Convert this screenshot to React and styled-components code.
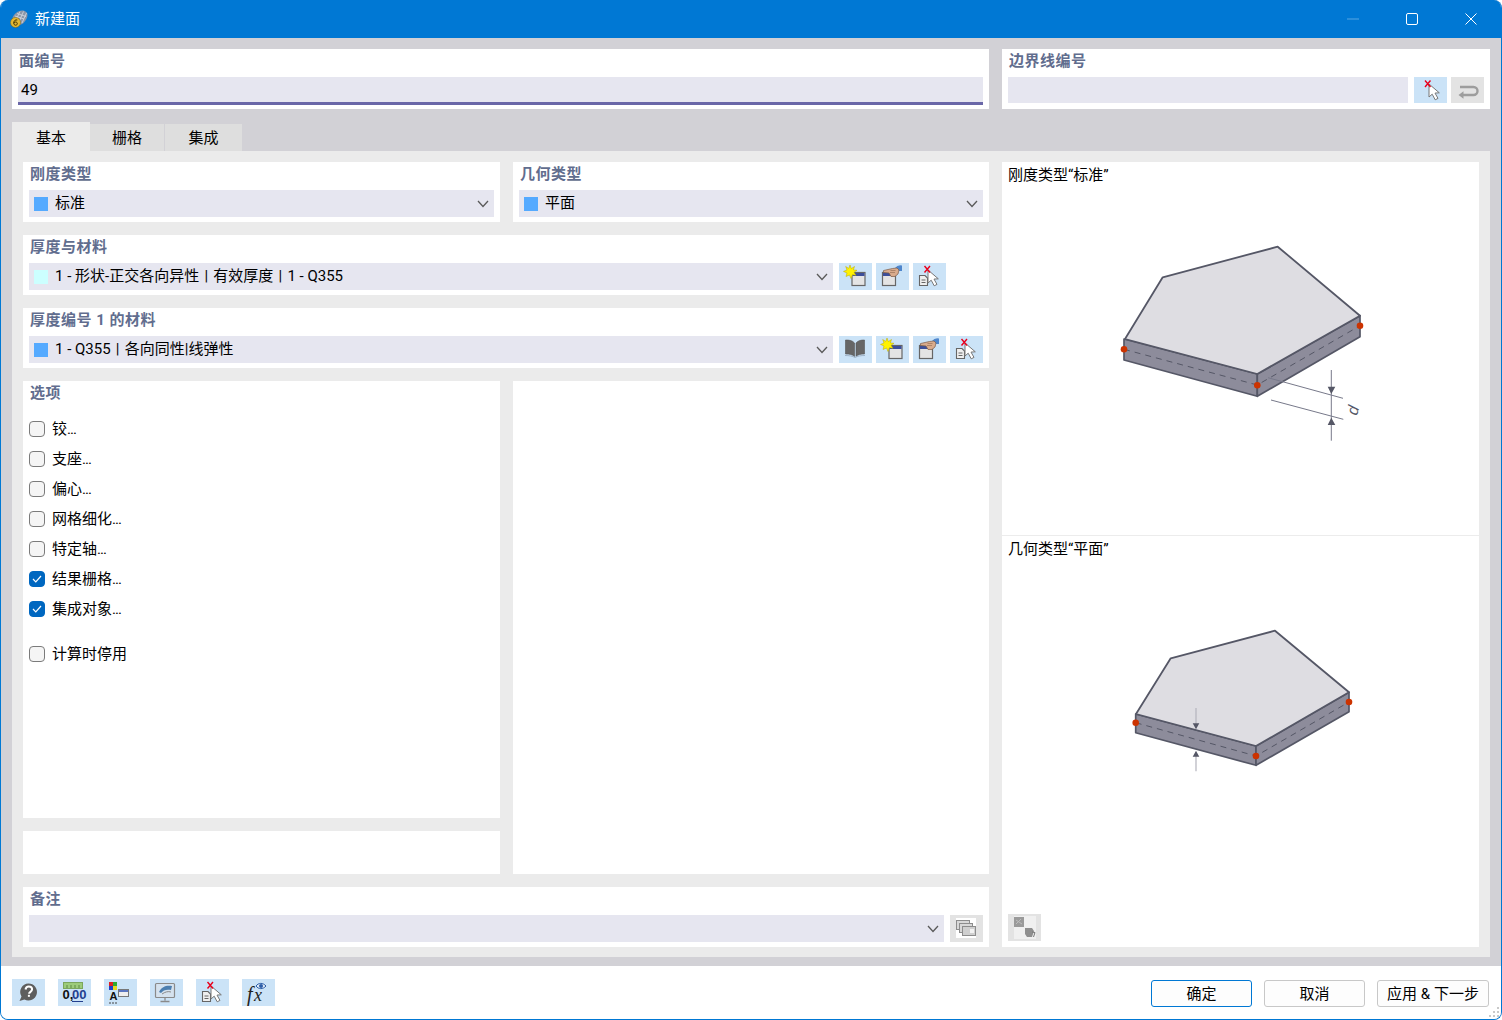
import styled, { createGlobalStyle } from "styled-components";

const GlobalStyle = createGlobalStyle`
  html, body {
    margin: 0;
    padding: 0;
    background: #ffffff;
  }
  body {
    font-family: Roboto, "Noto Sans CJK SC", sans-serif;
    font-size: 15px;
    color: #000000;
  }
`;

const Window = styled.div`
  box-sizing: border-box;
  width: 1502px;
  height: 1020px;
  display: flex;
  flex-direction: column;
  border: 1px solid #0078d4;
  border-top: 0;
  border-radius: 8px;
  overflow: hidden;
  background: #d2d1d6;
`;

const TitleBar = styled.div`
  height: 38px;
  flex: none;
  margin: 0 -1px;
  padding: 0 2px 0 10px;
  display: flex;
  align-items: center;
  background: #0078d4;
  color: #ffffff;
`;

const TitleText = styled.div`
  margin-left: 7px;
  flex: 1;
  line-height: 38px;
`;

const WindowControl = styled.div`
  width: 59px;
  height: 38px;
  display: flex;
  align-items: center;
  justify-content: center;
`;

const Content = styled.div`
  flex: 1;
  padding: 11px 11px 9px;
  display: flex;
  flex-direction: column;
`;

const TopRow = styled.div`
  display: grid;
  grid-template-columns: 977px 488px;
  gap: 13px;
`;

const Panel = styled.div`
  box-sizing: border-box;
  background: #ffffff;
  height: ${(p) => p.$height || 60}px;
  padding: 0 6px;
  min-width: 0;
`;

const Label = styled.div`
  height: 28px;
  padding-left: 1px;
  line-height: 25px;
  font-weight: 700;
  letter-spacing: 0.5px;
  color: #616d8e;
`;

const Row = styled.div`
  display: flex;
  gap: 6px;
  padding-right: ${(p) => p.$reserve || 0}px;
`;

const Field = styled.div`
  box-sizing: border-box;
  flex: 1;
  height: ${(p) => (p.$active ? 28 : 26)}px;
  padding: 0 3px;
  line-height: 27px;
  background: #e6e6f0;
  border-bottom: ${(p) => (p.$active ? "3px solid #6a67a8" : "0")};
`;

const Select = styled.div`
  flex: 1;
  height: 27px;
  padding: 0 5px;
  display: flex;
  align-items: center;
  gap: 7px;
  background: #e6e6f0;
`;

const Swatch = styled.span`
  width: 14px;
  height: 14px;
  flex: none;
  background: ${(p) => p.$color};
`;

const SelectText = styled.span`
  flex: 1;
  line-height: 27px;
  height: 27px;
  white-space: nowrap;
`;

const Separator = styled.span`
  margin: 0 1.5px;
`;

const ButtonGroup = styled.div`
  display: flex;
  gap: 4px;
`;

const IconButton = styled.div`
  width: 33px;
  height: ${(p) => p.$height || 27}px;
  flex: none;
  background: ${(p) => (p.$disabled ? "#e3e3e3" : "#cbe3f7")};

  svg {
    display: block;
  }
`;

const Tabs = styled.div`
  display: flex;
  align-items: flex-end;
  height: 29px;
  margin-top: 13px;
`;

const Tab = styled.div`
  box-sizing: border-box;
  width: ${(p) => p.$width}px;
  height: ${(p) => (p.$active ? 29 : 28)}px;
  margin-bottom: ${(p) => (p.$active ? 0 : -1)}px;
  margin-right: ${(p) => (p.$gap ? 1 : 0)}px;
  text-align: center;
  line-height: ${(p) => (p.$active ? 32 : 28)}px;
  background: ${(p) => (p.$active ? "#ebebeb" : "#dedede")};
`;

const TabBody = styled.div`
  flex: 1;
  padding: 11px 11px 10px;
  display: grid;
  grid-template-columns: 966px 477px;
  gap: 13px;
  background: #ebebeb;
`;

const LeftColumn = styled.div`
  display: flex;
  flex-direction: column;
  gap: 13px;
`;

const TwoColumns = styled.div`
  display: grid;
  grid-template-columns: 477px 476px;
  gap: 13px;
`;

const Stack = styled.div`
  display: flex;
  flex-direction: column;
  gap: 13px;
`;

const OptionList = styled.div`
  padding-top: 5px;
`;

const OptionRow = styled.div`
  height: 30px;
  display: flex;
  align-items: center;
  gap: 7px;
  margin-top: ${(p) => p.$offset || 0}px;
`;

const OptionText = styled.span`
  line-height: 30px;
  height: 30px;
`;

const Dots = styled.span`
  letter-spacing: -1px;
`;

const Box = styled.span`
  box-sizing: border-box;
  width: 16px;
  height: 16px;
  flex: none;
  display: flex;
  align-items: center;
  justify-content: center;
  border-radius: 4px;
  border: 1px solid ${(p) => (p.$checked ? "#0067c0" : "#7b7b7b")};
  background: ${(p) => (p.$checked ? "#0067c0" : "#f5f5f5")};
`;

const PreviewColumn = styled.div`
  display: flex;
  flex-direction: column;
  background: #ffffff;
`;

const Preview = styled.div`
  flex: ${(p) => (p.$fill ? 1 : "none")};
  height: ${(p) => (p.$fill ? "auto" : "373px")};
  display: flex;
  flex-direction: column;
  padding: 0 6px;
  border-bottom: ${(p) => (p.$fill ? "0" : "1px solid #ececec")};
`;

const Caption = styled.div`
  height: 26px;
  line-height: 26px;
`;

const Drawing = styled.svg`
  display: block;
  flex: none;
  align-self: center;
  margin: ${(p) => p.$top}px 0 0 -1px;
`;

const PreviewFooter = styled.div`
  margin-top: auto;
  padding-bottom: 6px;
`;

const Footer = styled.div`
  height: 53px;
  flex: none;
  padding: 13px 12px 0 11px;
  box-sizing: border-box;
  display: flex;
  gap: 12px;
  background: #ffffff;
  position: relative;
`;

const ToolGroup = styled.div`
  flex: 1;
  display: flex;
  gap: 13px;
`;

const DialogButton = styled.div`
  box-sizing: border-box;
  width: ${(p) => p.$width || 101}px;
  height: 27px;
  margin-top: 1px;
  text-align: center;
  line-height: 27px;
  border-radius: 3px;
  border: 1px solid ${(p) => (p.$primary ? "#0078d4" : "#c8c8c8")};
  background: #fdfdfd;
`;

const Grip = styled.svg`
  position: absolute;
  right: 1px;
  bottom: 1px;
`;

const Chevron = () => (
  <svg width="12" height="8" viewBox="0 0 12 8">
    <path d="M1 1l5 5.5L11 1" fill="none" stroke="#5a5a5a" strokeWidth="1.3" />
  </svg>
);

const NewIcon = () => (
  <svg width="33" height="27" viewBox="0 0 33 27">
    <rect x="13" y="9.500" width="13" height="13" fill="#e4e4e4" stroke="#666" strokeWidth="1.200" />
    <rect x="13.500" y="10" width="12" height="3" fill="#3c4f9a" />
    <path d="M11 2l1.300 3.600L15.500 3.500l-1.100 3.400 3.600.4-3 2 2 3-3.600-.6L12 15.500 10.500 12 7 13.500l1-3.500-3.500-1.600L8 7 6.700 3.500l3.100 1.900z" fill="#fff200" stroke="#b9a800" strokeWidth=".5" />
  </svg>
);

const EditIcon = () => (
  <svg width="33" height="27" viewBox="0 0 33 27">
    <rect x="6.500" y="9.500" width="13" height="13" fill="#e4e4e4" stroke="#666" strokeWidth="1.200" />
    <rect x="7" y="10" width="12" height="3" fill="#3c4f9a" />
    <path d="M19 5a7 7 0 0 1 7-2.500V8h-4a4 4 0 0 0-3-3z" fill="#4f86cc" />
    <path d="M7.500 7.500c3-.5 6-1.500 9-2l4.500-.5 2 2-1 4-3 2.500h-4l-2-3.500-5.500-.5z" fill="#d9ab8c" stroke="#7a5a48" strokeWidth=".7" />
    <path d="M14 9.500h5M14.500 7.500h5" stroke="#8f6a52" strokeWidth=".6" />
  </svg>
);

const PickIcon = () => (
  <svg width="33" height="27" viewBox="0 0 33 27">
    <path d="M6.500 12.500h5.500l2.500 2.500v7.500h-8z" fill="#efefef" stroke="#666" strokeWidth="1.100" />
    <path d="M8.500 17h4M8.500 19.500h4" stroke="#666" />
    <path d="M15 7v13l3.200-2.800 3 5.600 2.800-1.400-3-5.300 4.300-.3z" fill="#ffffff" stroke="#777" />
    <path d="M11.500 3l5.500 6.500M17 3l-5.500 6.500" stroke="#e8001c" strokeWidth="1.400" />
  </svg>
);

const BookIcon = () => (
  <svg width="33" height="27" viewBox="0 0 33 27">
    <path d="M15.500 7c-2-2.500-5-3-9-3v14c4 0 7 .5 9 2.500z" fill="#666" stroke="#555" strokeWidth=".6" />
    <path d="M17 7c2-2.500 5-3 8.500-3v14c-3.500 0-6.500 .5-8.500 2.500z" fill="#666" stroke="#555" strokeWidth=".6" />
    <path d="M6 19.500c4 0 7.500.5 10 2 2.500-1.500 6-2 10-2" fill="none" stroke="#9fb3c8" />
  </svg>
);

const ReturnIcon = () => (
  <svg width="33" height="26" viewBox="0 0 33 26">
    <path d="M11 18h11.500a4 4 0 0 0 0-8H9" fill="none" stroke="#9d9d9d" strokeWidth="2.400" />
    <path d="M7.500 18l5-3.800v7.600z" fill="#9d9d9d" />
  </svg>
);

const WindowsIcon = () => (
  <svg width="33" height="27" viewBox="0 0 33 27">
    <rect x="6" y="3" width="20" height="20" fill="#ffffff" />
    <rect x="6.500" y="5.500" width="13" height="9" fill="#d8d8d8" stroke="#8c8c8c" />
    <rect x="9.500" y="8.500" width="13" height="9" fill="#d8d8d8" stroke="#8c8c8c" />
    <rect x="12.500" y="11.500" width="13" height="9" fill="#cfcfcf" stroke="#8c8c8c" />
    <rect x="20" y="14" width="4" height="4" fill="#f2f2f2" />
  </svg>
);

const ViewIcon = () => (
  <svg width="33" height="27" viewBox="0 0 33 27">
    <rect x="6" y="2" width="22" height="23" fill="#f4f4f4" opacity=".75" />
    <rect x="6" y="3" width="10" height="10" fill="#9a9a9a" />
    <path d="M8 6l6 4M8 10l5-5" stroke="#bcbcbc" />
    <path d="M17 14h7l2 3-2 6h-5l-2-3z" fill="#8f8f8f" />
    <path d="M24 18l3 .5-1.500 4.500" fill="none" stroke="#777" />
  </svg>
);

const HelpIcon = () => (
  <svg width="33" height="27" viewBox="0 0 33 27">
    <path d="M16.500 4.500a8.500 8.500 0 1 1-4 16l-5 1.500 2-4.500a8.500 8.500 0 0 1 7-13z" fill="#5e5e5e" />
    <path d="M13.500 10.500c.3-2 1.500-3 3.300-3 1.900 0 3.300 1.100 3.300 2.800 0 2.500-3 2.500-3 4.500" fill="none" stroke="#ffffff" strokeWidth="2" />
    <rect x="15.900" y="15.800" width="2" height="2" fill="#ffffff" />
  </svg>
);

const UnitsIcon = () => (
  <svg width="33" height="27" viewBox="0 0 33 27">
    <rect x="5.500" y="3.500" width="19" height="6" fill="#9ccb7a" stroke="#7ba65c" />
    <path d="M9 6v3M13 6v3M17 6v3M21 6v3" stroke="#5f8a44" />
    <text x="4.500" y="20" fontFamily="Liberation Sans" fontWeight="700" fontSize="13" fill="#111">0,</text>
    <text x="14" y="20" fontFamily="Liberation Sans" fontWeight="700" fontSize="13" fill="#23408f">00</text>
    <path d="M14 22.500h11" stroke="#23408f" strokeWidth="1.200" />
  </svg>
);

const ColorsIcon = () => (
  <svg width="33" height="27" viewBox="0 0 33 27">
    <rect x="5" y="3" width="4" height="4" fill="#e02020" />
    <rect x="9" y="3" width="4" height="4" fill="#2fa82f" />
    <rect x="5" y="7" width="4" height="4" fill="#2040c8" />
    <rect x="9" y="7" width="4" height="4" fill="#e8d820" />
    <text x="5.500" y="21" fontFamily="Liberation Sans" fontWeight="700" fontSize="11" fill="#111">A</text>
    <path d="M5 24h2M8 24h2M11 24h2" stroke="#444" />
    <rect x="14.500" y="10.500" width="10" height="7" fill="#eeeeee" stroke="#777" />
    <rect x="15" y="11" width="9" height="2" fill="#5a75c0" />
  </svg>
);

const DisplayIcon = () => (
  <svg width="33" height="27" viewBox="0 0 33 27">
    <rect x="5.500" y="4.500" width="19" height="14" rx="1" fill="#d5e2ee" stroke="#8a8a8a" strokeWidth="1.200" />
    <path d="M9 13c3-6 8-7 13-6l-1 4c-4-1-8 0-10 3z" fill="#4c7fb0" />
    <path d="M12 15c3-2 6-3 9-2" fill="none" stroke="#8a8a8a" />
    <path d="M15 18.500v3M10.500 22.500h9" stroke="#8a8a8a" strokeWidth="1.300" />
  </svg>
);

const FormulaIcon = () => (
  <svg width="33" height="27" viewBox="0 0 33 27">
    <text x="5" y="22" fontFamily="Liberation Serif" fontStyle="italic" fontSize="20" fill="#222">f</text>
    <text x="12" y="22" fontFamily="Liberation Serif" fontStyle="italic" fontSize="18" fill="#222">x</text>
    <path d="M14 7c2.500-3.500 7-3.500 10 0-3 3.500-7.500 3.500-10 0z" fill="#dfe9f5" stroke="#2d5ea8" />
    <circle cx="19" cy="7" r="2" fill="#2d5ea8" />
  </svg>
);

const AppIcon = () => (
  <svg width="18" height="18" viewBox="0 0 18 18">
    <path d="M2.500 8C4 3.500 8 .8 12 .5c3 0 5.500 1.500 5.500 4.500 0 3-2 6-4.500 8.500l-3 1.500-4-3z" fill="#8d97a8" />
    <path d="M5 6l9 3M7 3.500l9 3M10 1.500L6 10M13.500 1.500L9 12M16.500 3l-4.500 10" stroke="#d6dbe3" strokeWidth=".8" />
    <circle cx="5.500" cy="12.500" r="5" fill="#e5b933" stroke="#7d6410" strokeWidth=".5" />
    <path d="M7.300 10c-2-.5-3.500.7-3.500 3 0 1.400.7 2.200 1.800 2.200s1.700-.7 1.700-1.600-.7-1.600-1.700-1.600-1.600.5-1.800 1.100" fill="none" stroke="#3a3000" strokeWidth="1" />
  </svg>
);

const PickNarrowIcon = () => (
  <svg width="33" height="26" viewBox="0 0 33 26">
    <path d="M15 7v13l3.200-2.800 3 5.600 2.800-1.400-3-5.300 4.300-.3z" fill="#ffffff" stroke="#777" />
    <path d="M11 3.500l5.500 6.500M16.500 3.500L11 10" stroke="#e8001c" strokeWidth="1.400" />
  </svg>
);

const Plate = ({ top, left, right, mid, dots, children }) => (
  <>
    <polygon points={left} fill="#8d8c9b" stroke="#555766" strokeWidth="1.700" strokeLinejoin="round" />
    <polygon points={right} fill="#8d8c9b" stroke="#555766" strokeWidth="1.700" strokeLinejoin="round" />
    <polygon points={top} fill="#dedde2" stroke="#555766" strokeWidth="1.800" strokeLinejoin="round" />
    <polyline points={mid} fill="none" stroke="#555766" strokeWidth="1" strokeDasharray="6 5" />
    {children}
    {dots.map(([cx, cy]) => (
      <circle key={cx} cx={cx} cy={cy} r="3.300" fill="#cc3300" />
    ))}
  </>
);

const options = [
  { label: "铰" },
  { label: "支座" },
  { label: "偏心" },
  { label: "网格细化" },
  { label: "特定轴" },
  { label: "结果栅格", checked: true },
  { label: "集成对象", checked: true },
];

const Option = ({ label, plain, checked, offset }) => (
  <OptionRow $offset={offset}>
    <Box $checked={checked}>
      {checked && (
        <svg width="10" height="8" viewBox="0 0 10 8">
          <path d="M1 4l2.800 2.800L9 1" fill="none" stroke="#ffffff" strokeWidth="1.200" />
        </svg>
      )}
    </Box>
    <OptionText>
      {label}
      {!plain && <Dots>...</Dots>}
    </OptionText>
  </OptionRow>
);

export default function App() {
  return (
    <>
      <GlobalStyle />
      <Window>
        <TitleBar>
          <AppIcon />
          <TitleText>新建面</TitleText>
          <WindowControl>
            <svg width="12" height="2" viewBox="0 0 12 2">
              <path d="M0 1h12" stroke="#ffffff" strokeOpacity=".35" />
            </svg>
          </WindowControl>
          <WindowControl>
            <svg width="12" height="12" viewBox="0 0 12 12">
              <rect x=".5" y=".5" width="11" height="11" rx="1.500" fill="none" stroke="#ffffff" />
            </svg>
          </WindowControl>
          <WindowControl>
            <svg width="12" height="12" viewBox="0 0 12 12">
              <path d="M.5.5l11 11M11.500.5l-11 11" stroke="#ffffff" />
            </svg>
          </WindowControl>
        </TitleBar>

        <Content>
          <TopRow>
            <Panel>
              <Label>面编号</Label>
              <Field $active>49</Field>
            </Panel>
            <Panel>
              <Label>边界线编号</Label>
              <Row>
                <Field />
                <ButtonGroup>
                  <IconButton $height={26}>
                    <PickNarrowIcon />
                  </IconButton>
                  <IconButton $height={26} $disabled>
                    <ReturnIcon />
                  </IconButton>
                </ButtonGroup>
              </Row>
            </Panel>
          </TopRow>

          <Tabs>
            <Tab $active $width={78}>基本</Tab>
            <Tab $width={74} $gap>栅格</Tab>
            <Tab $width={77}>集成</Tab>
          </Tabs>

          <TabBody>
            <LeftColumn>
              <TwoColumns>
                <Panel>
                  <Label>刚度类型</Label>
                  <Select>
                    <Swatch $color="#55aaff" />
                    <SelectText>标准</SelectText>
                    <Chevron />
                  </Select>
                </Panel>
                <Panel>
                  <Label>几何类型</Label>
                  <Select>
                    <Swatch $color="#55aaff" />
                    <SelectText>平面</SelectText>
                    <Chevron />
                  </Select>
                </Panel>
              </TwoColumns>

              <Panel>
                <Label>厚度与材料</Label>
                <Row $reserve={37}>
                  <Select>
                    <Swatch $color="#ccffff" />
                    <SelectText>
                      1 - 形状-正交各向异性 <Separator>|</Separator> 有效厚度 <Separator>|</Separator> 1 - Q355
                    </SelectText>
                    <Chevron />
                  </Select>
                  <ButtonGroup>
                    <IconButton><NewIcon /></IconButton>
                    <IconButton><EditIcon /></IconButton>
                    <IconButton><PickIcon /></IconButton>
                  </ButtonGroup>
                </Row>
              </Panel>

              <Panel>
                <Label>厚度编号 1 的材料</Label>
                <Row>
                  <Select>
                    <Swatch $color="#55aaff" />
                    <SelectText>
                      1 - Q355 <Separator>|</Separator> 各向同性|线弹性
                    </SelectText>
                    <Chevron />
                  </Select>
                  <ButtonGroup>
                    <IconButton><BookIcon /></IconButton>
                    <IconButton><NewIcon /></IconButton>
                    <IconButton><EditIcon /></IconButton>
                    <IconButton><PickIcon /></IconButton>
                  </ButtonGroup>
                </Row>
              </Panel>

              <TwoColumns>
                <Stack>
                  <Panel $height={437}>
                    <Label>选项</Label>
                    <OptionList>
                      {options.map((o) => (
                        <Option key={o.label} {...o} />
                      ))}
                      <Option label="计算时停用" plain offset={15} />
                    </OptionList>
                  </Panel>
                  <Panel $height={43} />
                </Stack>
                <Panel $height={493} />
              </TwoColumns>

              <Panel>
                <Label>备注</Label>
                <Row>
                  <Select>
                    <SelectText />
                    <Chevron />
                  </Select>
                  <IconButton $disabled><WindowsIcon /></IconButton>
                </Row>
              </Panel>
            </LeftColumn>

            <PreviewColumn>
              <Preview>
                <Caption>刚度类型“标准”</Caption>
                <Drawing width="280" height="215" viewBox="0 0 280 215" $top={47}>
                  <Plate
                    top="25,104 62.700,42.300 177.700,11.700 260,80.700 157.300,139"
                    left="24,104 24,125 157.300,161.300 157.300,139"
                    right="157.300,139 157.300,161.300 260,101.700 260,80.700"
                    mid="24,114.300 157.300,150 260,90.700"
                    dots={[[24, 114.3], [157.3, 150.3], [260, 90.7]]}
                  >
                    <path d="M168 142.700L243 163.300M171 165L243.300 184.300M231.300 135V205.700" stroke="#77798a" strokeWidth="1" fill="none" />
                    <path d="M227.700 151.700h7.600L231.300 159zM227.700 190h7.600l-4-7.300z" fill="#555766" />
                    <text x="0" y="0" transform="translate(257 181) rotate(-75)" fontFamily="Liberation Sans" fontStyle="italic" fontSize="16" fill="#555766">d</text>
                  </Plate>
                </Drawing>
              </Preview>
              <Preview $fill>
                <Caption>几何类型“平面”</Caption>
                <Drawing width="260" height="160" viewBox="0 0 260 160" $top={58}>
                  <Plate
                    top="26,94 60.700,38.300 165,10.700 239,72.300 146,126"
                    left="25.700,94 25.700,112.700 146,145.300 146,126"
                    right="146,126 146,145.300 239,91.700 239,72.300"
                    mid="25.700,102.700 146,136 239,82"
                    dots={[[25.7, 102.7], [146, 136], [239, 82]]}
                  >
                    <path d="M86 88V104M86 136V151.300" stroke="#b4b4bd" strokeWidth="1.200" />
                    <path d="M82.700 103.300h6.600L86 109.300zM82.700 136.700h6.600L86 130.700z" fill="#555766" />
                  </Plate>
                </Drawing>
                <PreviewFooter>
                  <IconButton $disabled><ViewIcon /></IconButton>
                </PreviewFooter>
              </Preview>
            </PreviewColumn>
          </TabBody>
        </Content>

        <Footer>
          <ToolGroup>
            <IconButton><HelpIcon /></IconButton>
            <IconButton><UnitsIcon /></IconButton>
            <IconButton><ColorsIcon /></IconButton>
            <IconButton><DisplayIcon /></IconButton>
            <IconButton><PickIcon /></IconButton>
            <IconButton><FormulaIcon /></IconButton>
          </ToolGroup>
          <DialogButton $primary>确定</DialogButton>
          <DialogButton>取消</DialogButton>
          <DialogButton $width={112}>应用 &amp; 下一步</DialogButton>
          <Grip width="12" height="12" viewBox="0 0 12 12">
            <path d="M9 1h2v2H9zM5 5h2v2H5zM9 5h2v2H9zM1 9h2v2H1zM5 9h2v2H5zM9 9h2v2H9z" fill="#c9c9c9" />
          </Grip>
        </Footer>
      </Window>
    </>
  );
}
